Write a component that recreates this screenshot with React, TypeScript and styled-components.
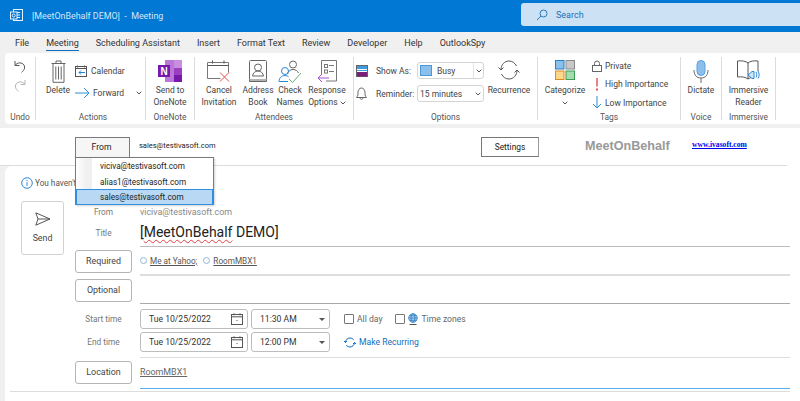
import React from 'react'
import styled, { createGlobalStyle } from 'styled-components'

const GlobalStyle = createGlobalStyle`
  html, body { margin: 0; padding: 0; height: 100%; overflow: hidden; background: #fff; }
  body { font-family: Roboto, "Open Sans", sans-serif; color: #444; }
  * { box-sizing: border-box; }
`

const Page = styled.div`
  display: flex;
  flex-direction: column;
  width: 800px;
  height: 401px;
  overflow: hidden;
`

const TitleBar = styled.div`
  display: flex;
  align-items: flex-start;
  height: 32px;
  flex: none;
  padding: 3px 0 0 10px;
  background: #0078d4;
`

const AppIcon = styled.svg`
  margin-top: 6px;
  flex: none;
`

const TitleText = styled.span`
  margin: 6px 0 0 9px;
  width: 489px;
  font-size: 8.9px;
  line-height: 14px;
  color: #d3e7f8;
`

const SearchBox = styled.div`
  display: flex;
  align-items: center;
  gap: 8px;
  flex: 1;
  height: 23px;
  padding-left: 15px;
  border-radius: 3px 0 0 3px;
  background: #cce2f4;
  font-size: 9px;
  color: #1f6fb0;
`

const TabBar = styled.div`
  display: flex;
  gap: 17px;
  height: 21px;
  flex: none;
  padding-left: 15px;
  background: #f0f0f0;
`

const Tab = styled.span<{ $active?: boolean }>`
  height: 19px;
  line-height: 22px;
  font-size: 9px;
  color: #333;
  border-bottom: ${p => (p.$active ? '1.5px solid #106ebe' : 'none')};
`

const RibbonArea = styled.div`
  flex: none;
  height: 75px;
  padding: 0 0 4px 5px;
  background: #f0f0f0;
`

const Ribbon = styled.div`
  display: flex;
  height: 71px;
  padding: 4px 0;
  border-radius: 4px 0 0 4px;
  background: #fff;
`

const Group = styled.div<{ $w: number; $pl?: number }>`
  display: flex;
  flex-direction: column;
  width: ${p => p.$w}px;
  flex: none;
  padding-left: ${p => p.$pl ?? 0}px;
  border-right: 1px solid #dcdcdc;
`

const GroupBody = styled.div`
  display: flex;
  flex: 1;
  min-height: 0;
`

const GroupLabel = styled.div`
  height: 6px;
  line-height: 6px;
  text-align: center;
  font-size: 8.4px;
  color: #555;
`

const LargeButton = styled.div<{ $w: number }>`
  display: flex;
  flex-direction: column;
  align-items: center;
  width: ${p => p.$w}px;
  flex: none;
  padding-top: 3px;
  text-align: center;
  white-space: nowrap;
  font-size: 8.5px;
  line-height: 11.5px;
  color: #444;
`

const LargeIcon = styled.div`
  display: flex;
  justify-content: center;
  height: 25px;
  flex: none;
`

const LargeText = styled.span`
  display: block;
`

const UndoStack = styled.div`
  display: flex;
  flex-direction: column;
  align-items: center;
  gap: 6px;
  width: 100%;
  padding-top: 3px;
`

const SmallStack = styled.div<{ $w?: number; $gap: number; $pad: number }>`
  display: flex;
  flex-direction: column;
  gap: ${p => p.$gap}px;
  width: ${p => (p.$w ? `${p.$w}px` : 'auto')};
  flex: none;
  padding-top: ${p => p.$pad}px;
`

const SmallItem = styled.div`
  display: flex;
  align-items: center;
  gap: 3px;
  height: 13px;
  white-space: nowrap;
  font-size: 8.5px;
  color: #444;
`

const MenuArrow = styled.span`
  display: flex;
  margin-left: 9px;
`

const OptionRow = styled.div`
  display: flex;
  align-items: center;
  height: 17px;
  white-space: nowrap;
  font-size: 8.5px;
  color: #444;
`

const OptionIcon = styled.div`
  display: flex;
  justify-content: center;
  width: 15px;
  margin-right: 7px;
  flex: none;
`

const OptionName = styled.span`
  width: 41px;
  flex: none;
`

const RibbonSelect = styled.div`
  display: flex;
  align-items: center;
  width: 67px;
  height: 17px;
  flex: none;
  padding-left: 2px;
  border: 1px solid #d5d5d5;
  border-radius: 3px;
  font-size: 8.5px;
  color: #444;
`

const SelectValue = styled.span`
  display: flex;
  align-items: center;
  gap: 5px;
  flex: 1;
`

const BusySwatch = styled.span`
  width: 12px;
  height: 11px;
  border: 1px solid #4f97d6;
  background: #8cc0ec;
`

const ChevronCell = styled.span<{ $split?: boolean }>`
  display: flex;
  align-items: center;
  justify-content: center;
  width: 10px;
  height: 100%;
  border-left: ${p => (p.$split ? '1px solid #e2e2e2' : 'none')};
`

const AddinPane = styled.div`
  display: flex;
  align-items: flex-start;
  height: 38px;
  flex: none;
  margin-right: 13px;
  padding: 9px 0 0 75px;
  border-bottom: 1px solid #dcdcdc;
  background: #fff;
`

const FromAnchor = styled.div`
  position: relative;
  width: 55px;
  flex: none;
`

const FromButton = styled.div`
  height: 20px;
  line-height: 19px;
  text-align: center;
  padding-right: 2px;
  border: 1px solid #7a7a7a;
  border-bottom: none;
  background: #f6f6f6;
  font-size: 8.6px;
  color: #222;
`

const FromMenu = styled.div`
  position: absolute;
  top: 20px;
  left: 0;
  z-index: 5;
  width: 139px;
  height: 48px;
  border: 1px solid #7a7a7a;
  background: #fff;
  box-shadow: 1px 1px 2px rgba(0, 0, 0, 0.18);
`

const MenuItem = styled.div<{ $selected?: boolean }>`
  height: ${p => (p.$selected ? '16px' : '15.5px')};
  line-height: ${p => (p.$selected ? '14px' : '16px')};
  padding-left: ${p => (p.$selected ? '23px' : '24px')};
  white-space: nowrap;
  font-size: 8.2px;
  color: #222;
  background: ${p => (p.$selected ? '#b9d8f3' : 'linear-gradient(90deg, #fff 0, #f0f0f0 10px, #f0f0f0 16px, #fff 16px)')};
  border: ${p => (p.$selected ? '1px solid #2f8fe0' : 'none')};
`

const SenderText = styled.span`
  width: 342px;
  margin-left: 9px;
  line-height: 18px;
  font-size: 7.5px;
  color: #222;
`

const SettingsButton = styled.div`
  width: 58px;
  height: 20px;
  flex: none;
  line-height: 19px;
  text-align: center;
  border: 1px solid #777;
  border-right-color: #999;
  font-size: 8.4px;
  color: #222;
`

const Brand = styled.span`
  width: 107px;
  margin-left: 46px;
  flex: none;
  line-height: 19px;
  font-family: "Liberation Sans", sans-serif;
  font-size: 12.6px;
  font-weight: 700;
  color: #999;
`

const SiteLink = styled.a`
  line-height: 16px;
  font-family: "Liberation Serif", serif;
  font-size: 7.6px;
  font-weight: 700;
  color: #0000ee;
`

const FormArea = styled.div`
  flex: 1;
  min-height: 0;
  padding-left: 5px;
  background: linear-gradient(90deg, #f0f0f0 12px, #fff 12px);
`

const FormCard = styled.div`
  height: 100%;
  padding: 10px 10px 0 16px;
  border-radius: 7px 0 0 0;
  background: #fff;
`

const Notice = styled.div`
  display: flex;
  align-items: center;
  gap: 2px;
  height: 14px;
  font-size: 8.2px;
  color: #555;
`

const Compose = styled.div`
  display: flex;
  gap: 11px;
  margin-top: 11px;
`

const SendButton = styled.div`
  display: flex;
  flex-direction: column;
  align-items: center;
  gap: 7px;
  width: 43px;
  height: 54px;
  flex: none;
  padding-top: 10px;
  border: 1px solid #d2d2d2;
  border-radius: 3px;
  font-size: 8.8px;
  color: #444;
`

const Fields = styled.div`
  display: flex;
  flex-direction: column;
  flex: 1;
  margin-top: 2px;
`

const FieldRow = styled.div<{ $h: number }>`
  display: grid;
  grid-template-columns: 57px 1fr;
  column-gap: 8px;
  align-items: center;
  height: ${p => p.$h}px;
  flex: none;
`

const FieldLabel = styled.div<{ $pb?: number }>`
  padding-bottom: ${p => p.$pb ?? 0}px;
  text-align: center;
  font-size: 8.3px;
  color: #777;
`

const TimeLabels = styled.div`
  display: flex;
  flex-direction: column;
  gap: 13px;
  padding-bottom: 2px;
`

const LabelButton = styled.div<{ $mb?: number }>`
  height: 23px;
  margin-bottom: ${p => p.$mb ?? 0}px;
  line-height: 21px;
  text-align: center;
  border: 1px solid #b5b5b5;
  border-radius: 3px;
  font-size: 8.9px;
  color: #444;
`

const FieldCell = styled.div<{ $line?: string; $lineW?: number; $pb?: number }>`
  display: flex;
  align-items: center;
  height: 100%;
  padding-bottom: ${p => p.$pb ?? 0}px;
  border-bottom: ${p => (p.$line ? `${p.$lineW ?? 1}px solid ${p.$line}` : 'none')};
`

const MutedText = styled.span`
  font-size: 8.9px;
  color: #888;
`

const TitleValue = styled.span`
  font-size: 14px;
  line-height: 20px;
  color: #222;
`

const Squiggle = styled.span`
  text-decoration: underline wavy #e04040 0.7px;
  text-underline-offset: 2px;
`

const Attendee = styled.span`
  display: inline-flex;
  align-items: center;
  gap: 3px;
  margin-right: 6px;
  font-size: 8.2px;
  color: #555;
`

const PresenceDot = styled.span`
  width: 7px;
  height: 7px;
  border: 1px solid #8fb6d6;
  border-radius: 50%;
`

const Underlined = styled.span`
  text-decoration: underline;
`

const TimeGrid = styled.div`
  display: flex;
  flex-direction: column;
  gap: 3px;
  width: 100%;
  padding: 5px 0 5px;
  border-bottom: 1px solid #ddd;
`

const TimeRow = styled.div`
  display: flex;
  align-items: center;
  gap: 3px;
  height: 20px;
`

const TimeBox = styled.div<{ $w: number }>`
  display: flex;
  align-items: center;
  justify-content: space-between;
  width: ${p => p.$w}px;
  height: 20px;
  flex: none;
  padding: 0 4px 0 8px;
  border: 1px solid #bdbdbd;
  border-radius: 3px;
  font-size: 8.6px;
  color: #333;
`

const CaretDown = styled.span`
  width: 0;
  height: 0;
  border-left: 3.5px solid transparent;
  border-right: 3.5px solid transparent;
  border-top: 3.5px solid #555;
`

const CheckLabel = styled.label<{ $ml: number }>`
  display: flex;
  align-items: center;
  gap: 3px;
  margin-left: ${p => p.$ml}px;
  font-size: 8.6px;
  color: #666;
`

const CheckSquare = styled.span`
  width: 10px;
  height: 10px;
  flex: none;
  border: 1px solid #777;
  border-radius: 1px;
`

const RecurringLink = styled.span`
  display: flex;
  align-items: center;
  gap: 3px;
  margin-left: 11px;
  font-size: 8.6px;
  color: #106ebe;
`

const LocationCell = styled.div`
  display: flex;
  align-items: center;
  height: 100%;
  padding-bottom: 3px;
  border-bottom: 1.5px solid #5aaef0;
  font-size: 8.9px;
  color: #666;
`

const BottomRule = styled.div`
  height: 1px;
  margin: 2px 0 0 -65px;
  background: #ddd;
`

const Chevron = () => (
  <svg width="6" height="4" viewBox="0 0 6 4"><path d="M.7.7 3 3l2.3-2.3" fill="none" stroke="#555" /></svg>
)

const UndoIcon = ({ color }: { color: string }) => (
  <svg width="12" height="13" viewBox="0 0 12 13" fill="none" stroke={color} strokeWidth="1">
    <path d="M1 1v4.500h4.500M1.200 5.300C3 2.800 6.500 2 9 4c2.600 2.200 2 6-1.500 8.300" />
  </svg>
)

const RedoIcon = ({ color }: { color: string }) => (
  <svg width="12" height="13" viewBox="0 0 12 13" fill="none" stroke={color} strokeWidth="1">
    <path d="M11 1v4.500H6.500M10.800 5.300C9 2.800 5.500 2 3 4 .4 6.200 1 10 4.500 12.300" />
  </svg>
)

const TrashIcon = () => (
  <svg width="15" height="23" viewBox="0 0 15 23" fill="none" stroke="#666" strokeWidth="1">
    <path d="M.5 3.500h14M5 3.500V1h5v2.500M2 3.500v18.800h11V3.500M4.800 6.500v13M7.500 6.500v13M10.200 6.500v13" />
  </svg>
)

const CalendarArrowIcon = () => (
  <svg width="13" height="12" viewBox="0 0 13 12" fill="none">
    <rect x=".5" y="1.500" width="11" height="10" stroke="#555" />
    <path d="M.5 3.500h11" stroke="#555" />
    <path d="M2.500.5v2M9.500.5v2" stroke="#555" />
    <path d="M10 7.500H4M6 5.500l-2 2 2 2" stroke="#1f86d6" />
  </svg>
)

const ForwardIcon = () => (
  <svg width="15" height="12" viewBox="0 0 15 12" fill="none" stroke="#2a8fdc">
    <path d="M0 6h14M9 1l5 5-5 5" />
  </svg>
)

const OneNoteIcon = () => (
  <svg width="24" height="22" viewBox="0 0 24 22">
    <rect x="7" y="0" width="17" height="22" fill="#ba77d8" />
    <rect x="16" y="0" width="8" height="8" fill="#c98de2" />
    <rect x="16" y="8" width="8" height="7" fill="#9b3fc0" />
    <rect x="16" y="15" width="8" height="7" fill="#7719aa" />
    <rect x="0" y="5" width="12" height="12" fill="#7719aa" />
    <text x="2.500" y="14.500" fontSize="10" fontWeight="700" fill="#fff" fontFamily="Liberation Sans">N</text>
  </svg>
)

const CancelIcon = () => (
  <svg width="24" height="22" viewBox="0 0 24 22" fill="none">
    <path d="M.5 18.500V2.500h21v10M.5 18.500h13" stroke="#777" />
    <path d="M.5 5.500h21" stroke="#555" />
    <path d="M5.500.5v3M17 .5v3" stroke="#555" />
    <path d="M13 21.500l9-9M13 12.500l9 9" stroke="#e0504a" />
  </svg>
)

const AddressIcon = () => (
  <svg width="18" height="23" viewBox="0 0 18 23" fill="none" stroke="#666">
    <rect x=".5" y=".5" width="17" height="19.500" rx="1" />
    <path d="M.5 20v1.500h17V20" />
    <circle cx="9" cy="7.500" r="3.500" />
    <path d="M3.500 16c.5-3 2.500-5 5.500-5s5 2 5.500 5z" />
  </svg>
)

const CheckNamesIcon = () => (
  <svg width="24" height="24" viewBox="0 0 24 24" fill="none">
    <circle cx="15" cy="4.500" r="3.500" stroke="#666" />
    <path d="M9.500 14c.5-2.500 2.500-4.500 5.500-4.500s4.500 1.500 5.500 3.500" stroke="#666" />
    <circle cx="7" cy="11" r="3.500" stroke="#2b88d8" />
    <path d="M1 21.500c0-3.500 2.500-6 6-6 1.500 0 2.500.4 3.500 1.200M1 21.500h9" stroke="#2b88d8" />
    <path d="M11 19l3.500 3.500L23 13" stroke="#5fae6c" />
  </svg>
)

const ResponseIcon = () => (
  <svg width="20" height="22" viewBox="0 0 20 22" fill="none">
    <path d="M4.500 15V.5h15v20.500H9" stroke="#777" />
    <rect x="7.500" y="4.500" width="3" height="3" stroke="#777" />
    <rect x="7.500" y="10" width="3" height="3" stroke="#777" />
    <path d="M12 5.500h5M12 11.500h5" stroke="#777" />
    <path d="M12 18H1M5 14l-4 4 4 4" stroke="#a74fd0" />
  </svg>
)

const ShowAsIcon = () => (
  <svg width="12" height="12" viewBox="0 0 12 12">
    <rect x=".5" y=".5" width="11" height="11" fill="#fff" stroke="#666" />
    <rect x="1" y="1" width="10" height="3" fill="#3f9be0" />
    <rect x="1" y="7" width="10" height="4.500" fill="#7a1f7a" />
    <path d="M1 5.500h10" stroke="#3f9be0" />
  </svg>
)

const BellIcon = () => (
  <svg width="11" height="13" viewBox="0 0 11 13" fill="none" stroke="#666">
    <path d="M.5 10.500c1.500-1.500 1.500-3 1.500-5C2 3 3.500 1 5.500 1S9 3 9 5.500c0 2 0 3.500 1.500 5zM4 10.500c0 2.500 3 2.500 3 0" />
  </svg>
)

const RecurrenceIcon = () => (
  <svg width="22" height="20" viewBox="0 0 22 20" fill="none" stroke="#555">
    <path d="M3 9.500C3 5 6.500 1 11 1c3.500 0 6 2 7.500 5M19 10.500c0 4.500-3.500 8.500-8 8.500-3.500 0-6-2-7.500-5" />
    <path d="M.5 7.500 3 10l2.500-2.500M16.500 12.500 19 10l2.500 2.500" />
  </svg>
)

const CategorizeIcon = () => (
  <svg width="20" height="20" viewBox="0 0 20 20">
    <rect x=".5" y=".5" width="8.500" height="8.500" fill="#8cc0ec" stroke="#2b7fc4" />
    <rect x="11" y=".5" width="8.500" height="8.500" fill="#c8c8c8" stroke="#8a8a8a" />
    <rect x=".5" y="11" width="8.500" height="8.500" fill="#fbd88a" stroke="#e08a1e" />
    <rect x="11" y="11" width="8.500" height="8.500" fill="#a5dcae" stroke="#3f9c55" />
  </svg>
)

const LockIcon = () => (
  <svg width="10" height="12" viewBox="0 0 10 12" fill="none" stroke="#666">
    <rect x=".5" y="5.500" width="9" height="6" />
    <path d="M2.500 5.500V3.500a2.500 2.500 0 0 1 5 0v2" />
  </svg>
)

const ExclaimIcon = () => (
  <svg width="10" height="13" viewBox="0 0 10 13">
    <rect x="4" y="0" width="2" height="8.500" fill="#f08080" />
    <rect x="4" y="10.500" width="2" height="2" fill="#e05050" />
  </svg>
)

const ArrowDownIcon = () => (
  <svg width="10" height="13" viewBox="0 0 10 13" fill="none" stroke="#2a8fdc">
    <path d="M5 0v12M1 8l4 4 4-4" />
  </svg>
)

const MicIcon = () => (
  <svg width="16" height="23" viewBox="0 0 16 23" fill="none">
    <rect x="4" y=".5" width="8" height="15" rx="4" fill="#8cc0ec" stroke="#5a9fdc" />
    <path d="M1 10c0 5 2.500 8 7 8s7-3 7-8M8 18v5" stroke="#666" />
  </svg>
)

const ReaderIcon = () => (
  <svg width="24" height="22" viewBox="0 0 24 22" fill="none">
    <path d="M11 3C9 1 4 .5 .5 1v16c4-.5 8 0 10.500 2 1.500-1 3-1.500 4-1.800M11 3v16M11 3c2-2 6-2.500 10-2v10" stroke="#555" />
    <path d="M11 15l4-3.500h2v7h-2z" fill="#cfe5f8" stroke="#2b88d8" />
    <path d="M19 12c1 1.500 1 4 0 5.500M21 11c1.500 2 1.500 5.500 0 7.500" stroke="#2b88d8" />
  </svg>
)

const OutlookGlyph = () => (
  <AppIcon width="13" height="13" viewBox="0 0 13 13" fill="none" stroke="#e8f2fb">
    <rect x="3.500" y=".5" width="9" height="11" />
    <path d="M6 3.500h4M6 6h4M6 8.500h4" />
    <rect x=".5" y="3" width="6.500" height="7" fill="#0078d4" />
    <circle cx="3.700" cy="6.500" r="1.500" />
  </AppIcon>
)

const SearchIcon = () => (
  <svg width="12" height="12" viewBox="0 0 12 12" fill="none" stroke="#2b7cbc">
    <circle cx="7.500" cy="4.500" r="3.500" />
    <path d="M5 7 1 11" />
  </svg>
)

const InfoIcon = () => (
  <svg width="12" height="12" viewBox="0 0 12 12" fill="none">
    <circle cx="6" cy="6" r="5.300" stroke="#2b88d8" />
    <path d="M6 5.200v3.600M6 3v1.200" stroke="#2b88d8" />
  </svg>
)

const SendIcon = () => (
  <svg width="16" height="14" viewBox="0 0 16 14" fill="none" stroke="#555">
    <path d="M.8.8 15 7 .8 13.200 3 7zM3 7h12" />
  </svg>
)

const DateIcon = () => (
  <svg width="12" height="12" viewBox="0 0 12 12" fill="none" stroke="#555">
    <rect x=".5" y="1.500" width="11" height="10" />
    <path d="M.5 3.800h11M3 .3v2M9 .3v2" />
    <rect x="5.500" y="7" width="1" height="1" fill="#555" stroke="none" />
  </svg>
)

const GlobeIcon = () => (
  <svg width="10" height="13" viewBox="0 0 10 13" fill="none" stroke="#2b7fc4" strokeWidth=".8">
    <circle cx="5" cy="5" r="4.300" fill="#a9d0f0" />
    <ellipse cx="5" cy="5" rx="2" ry="4.300" />
    <path d="M.7 5h8.600M1.500 2.700h7M1.500 7.300h7" />
    <path d="M1.500 11.500h7" stroke="#555" strokeWidth="1" />
  </svg>
)

const RecurSmallIcon = () => (
  <svg width="12" height="11" viewBox="0 0 12 11" fill="none" stroke="#106ebe">
    <path d="M1.500 5.500C1.500 3 3.500 1 6 1c1.700 0 3 .8 3.800 2M10.500 5.500c0 2.500-2 4.500-4.500 4.500-1.700 0-3-.8-3.800-2" />
    <path d="M0 4l1.500 1.500L3 4M9 7l1.500-1.500L12 7" />
  </svg>
)

const tabs = ['File', 'Meeting', 'Scheduling Assistant', 'Insert', 'Format Text', 'Review', 'Developer', 'Help', 'OutlookSpy']

const App = () => {
  return (
    <Page>
      <GlobalStyle />
      <TitleBar>
        <OutlookGlyph />
        <TitleText>[MeetOnBehalf DEMO]&nbsp; -&nbsp; Meeting</TitleText>
        <SearchBox><SearchIcon />Search</SearchBox>
      </TitleBar>

      <TabBar>
        {tabs.map(t => <Tab key={t} $active={t === 'Meeting'}>{t}</Tab>)}
      </TabBar>

      <RibbonArea>
        <Ribbon>
          <Group $w={31}>
            <GroupBody>
              <UndoStack>
                <UndoIcon color="#555" />
                <RedoIcon color="#b5b5b5" />
              </UndoStack>
            </GroupBody>
            <GroupLabel>Undo</GroupLabel>
          </Group>

          <Group $w={110} $pl={5}>
            <GroupBody>
              <LargeButton $w={34}>
                <LargeIcon><TrashIcon /></LargeIcon>
                <LargeText>Delete</LargeText>
              </LargeButton>
              <SmallStack $gap={9} $pad={7}>
                <SmallItem><CalendarArrowIcon />Calendar</SmallItem>
                <SmallItem><ForwardIcon />Forward<MenuArrow><Chevron /></MenuArrow></SmallItem>
              </SmallStack>
            </GroupBody>
            <GroupLabel>Actions</GroupLabel>
          </Group>

          <Group $w={49}>
            <GroupBody>
              <LargeButton $w={48}>
                <LargeIcon><OneNoteIcon /></LargeIcon>
                <LargeText>Send to<br />OneNote</LargeText>
              </LargeButton>
            </GroupBody>
            <GroupLabel>OneNote</GroupLabel>
          </Group>

          <Group $w={159}>
            <GroupBody>
              <LargeButton $w={48}>
                <LargeIcon><CancelIcon /></LargeIcon>
                <LargeText>Cancel<br />Invitation</LargeText>
              </LargeButton>
              <LargeButton $w={30}>
                <LargeIcon><AddressIcon /></LargeIcon>
                <LargeText>Address<br />Book</LargeText>
              </LargeButton>
              <LargeButton $w={34}>
                <LargeIcon><CheckNamesIcon /></LargeIcon>
                <LargeText>Check<br />Names</LargeText>
              </LargeButton>
              <LargeButton $w={40}>
                <LargeIcon><ResponseIcon /></LargeIcon>
                <LargeText>Response<br />Options <Chevron /></LargeText>
              </LargeButton>
            </GroupBody>
            <GroupLabel>Attendees</GroupLabel>
          </Group>

          <Group $w={184}>
            <GroupBody>
              <SmallStack $w={132} $gap={6} $pad={5}>
                <OptionRow>
                  <OptionIcon><ShowAsIcon /></OptionIcon>
                  <OptionName>Show As:</OptionName>
                  <RibbonSelect>
                    <SelectValue><BusySwatch />Busy</SelectValue>
                    <ChevronCell $split><Chevron /></ChevronCell>
                  </RibbonSelect>
                </OptionRow>
                <OptionRow>
                  <OptionIcon><BellIcon /></OptionIcon>
                  <OptionName>Reminder:</OptionName>
                  <RibbonSelect>
                    <SelectValue>15 minutes</SelectValue>
                    <ChevronCell><Chevron /></ChevronCell>
                  </RibbonSelect>
                </OptionRow>
              </SmallStack>
              <LargeButton $w={46}>
                <LargeIcon><RecurrenceIcon /></LargeIcon>
                <LargeText>Recurrence</LargeText>
              </LargeButton>
            </GroupBody>
            <GroupLabel>Options</GroupLabel>
          </Group>

          <Group $w={143}>
            <GroupBody>
              <LargeButton $w={54}>
                <LargeIcon><CategorizeIcon /></LargeIcon>
                <LargeText>Categorize<br /><Chevron /></LargeText>
              </LargeButton>
              <SmallStack $gap={5.5} $pad={2}>
                <SmallItem><LockIcon />Private</SmallItem>
                <SmallItem><ExclaimIcon />High Importance</SmallItem>
                <SmallItem><ArrowDownIcon />Low Importance</SmallItem>
              </SmallStack>
            </GroupBody>
            <GroupLabel>Tags</GroupLabel>
          </Group>

          <Group $w={41}>
            <GroupBody>
              <LargeButton $w={40}>
                <LargeIcon><MicIcon /></LargeIcon>
                <LargeText>Dictate</LargeText>
              </LargeButton>
            </GroupBody>
            <GroupLabel>Voice</GroupLabel>
          </Group>

          <Group $w={54}>
            <GroupBody>
              <LargeButton $w={53}>
                <LargeIcon><ReaderIcon /></LargeIcon>
                <LargeText>Immersive<br />Reader</LargeText>
              </LargeButton>
            </GroupBody>
            <GroupLabel>Immersive</GroupLabel>
          </Group>
        </Ribbon>
      </RibbonArea>

      <AddinPane>
        <FromAnchor>
          <FromButton>From</FromButton>
          <FromMenu>
            <MenuItem>viciva@testivasoft.com</MenuItem>
            <MenuItem>alias1@testivasoft.com</MenuItem>
            <MenuItem $selected>sales@testivasoft.com</MenuItem>
          </FromMenu>
        </FromAnchor>
        <SenderText>sales@testivasoft.com</SenderText>
        <SettingsButton>Settings</SettingsButton>
        <Brand>MeetOnBehalf</Brand>
        <SiteLink href="#">www.ivasoft.com</SiteLink>
      </AddinPane>

      <FormArea>
        <FormCard>
          <Notice><InfoIcon />You haven't</Notice>
          <Compose>
            <SendButton><SendIcon />Send</SendButton>
            <Fields>
              <FieldRow $h={17}>
                <FieldLabel>From</FieldLabel>
                <FieldCell><MutedText>viciva@testivasoft.com</MutedText></FieldCell>
              </FieldRow>
              <FieldRow $h={27}>
                <FieldLabel $pb={2}>Title</FieldLabel>
                <FieldCell $line="#bbb" $pb={3}><TitleValue>[<Squiggle>MeetOnBehalf</Squiggle> DEMO]</TitleValue></FieldCell>
              </FieldRow>
              <FieldRow $h={29}>
                <LabelButton>Required</LabelButton>
                <FieldCell $line="#ddd" $lineW={2}>
                  <Attendee><PresenceDot /><Underlined>Me at Yahoo;</Underlined></Attendee>
                  <Attendee><PresenceDot /><Underlined>RoomMBX1</Underlined></Attendee>
                </FieldCell>
              </FieldRow>
              <FieldRow $h={28}>
                <LabelButton>Optional</LabelButton>
                <FieldCell $line="#aaa" />
              </FieldRow>
              <FieldRow $h={54}>
                <TimeLabels>
                  <FieldLabel>Start time</FieldLabel>
                  <FieldLabel>End time</FieldLabel>
                </TimeLabels>
                <TimeGrid>
                  <TimeRow>
                    <TimeBox $w={108}>Tue 10/25/2022<DateIcon /></TimeBox>
                    <TimeBox $w={79}>11:30 AM<CaretDown /></TimeBox>
                    <CheckLabel $ml={11}><CheckSquare />All day</CheckLabel>
                    <CheckLabel $ml={10}><CheckSquare /><GlobeIcon />Time zones</CheckLabel>
                  </TimeRow>
                  <TimeRow>
                    <TimeBox $w={108}>Tue 10/25/2022<DateIcon /></TimeBox>
                    <TimeBox $w={79}>12:00 PM<CaretDown /></TimeBox>
                    <RecurringLink><RecurSmallIcon />Make Recurring</RecurringLink>
                  </TimeRow>
                </TimeGrid>
              </FieldRow>
              <FieldRow $h={31}>
                <LabelButton $mb={2}>Location</LabelButton>
                <LocationCell><Underlined>RoomMBX1</Underlined></LocationCell>
              </FieldRow>
              <BottomRule />
            </Fields>
          </Compose>
        </FormCard>
      </FormArea>
    </Page>
  )
}

export default App
